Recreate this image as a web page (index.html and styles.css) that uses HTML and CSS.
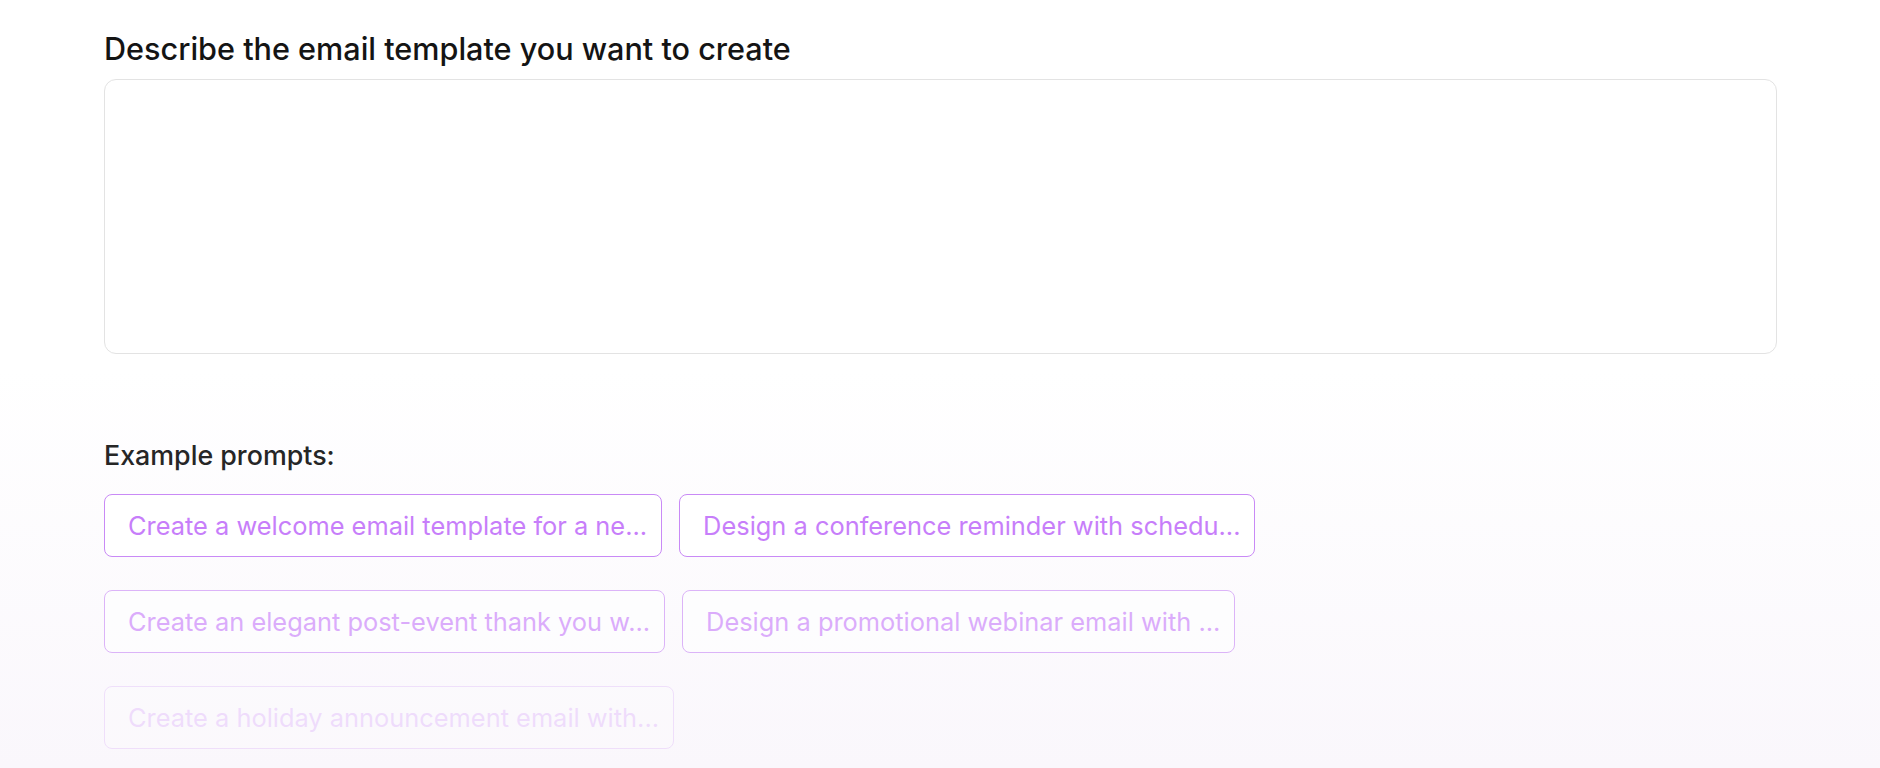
FILE: index.html
```html
<!DOCTYPE html>
<html lang="en">
<head>
<meta charset="utf-8">
<title>Email template generator</title>
<link rel="stylesheet" href="styles.css">
</head>
<body>
<main class="page">
  <h1 class="title">Describe the email template you want to create</h1>
  <textarea class="prompt-box"></textarea>
  <section class="examples">
    <h2 class="examples-title">Example prompts:</h2>
    <div class="prompt-list">
      <div class="prompt-row row-1">
        <button class="prompt-btn">Create a welcome email template for a ne...</button>
        <button class="prompt-btn">Design a conference reminder with schedu...</button>
      </div>
      <div class="prompt-row row-2">
        <button class="prompt-btn">Create an elegant post-event thank you w...</button>
        <button class="prompt-btn">Design a promotional webinar email with ...</button>
      </div>
      <div class="prompt-row row-3">
        <button class="prompt-btn">Create a holiday announcement email with...</button>
      </div>
    </div>
  </section>
</main>
</body>
</html>
```

FILE: styles.css
```css
html, body {
  margin: 0;
  height: 100%;
}
body {
  background: linear-gradient(to bottom, #ffffff 0%, #ffffff 48%, #faf7fc 100%);
  font-family: Inter, "Liberation Sans", sans-serif;
  overflow: hidden;
}
.page {
  padding: 31px 103px 0 104px;
  display: flex;
  flex-direction: column;
}
.title {
  margin: 0;
  font-size: 30.6px;
  line-height: 36px;
  font-weight: 500;
  color: #141414;
}
.prompt-box {
  margin-top: 12px;
  height: 275px;
  box-sizing: border-box;
  border: 1.5px solid #e3e3e3;
  border-radius: 12px;
  background: #fff;
  resize: none;
  outline: none;
  width: 100%;
}
.examples {
  margin-top: 86px;
}
.examples-title {
  margin: 0;
  font-size: 26.8px;
  line-height: 30px;
  font-weight: 500;
  color: #262626;
}
.prompt-list {
  margin-top: 24px;
  display: flex;
  flex-direction: column;
  gap: 33px;
}
.prompt-row {
  display: flex;
  gap: 17px;
}
.prompt-btn {
  height: 63px;
  padding: 0 14px 0 23px;
  border: 1.5px solid #c98af6;
  border-radius: 8px;
  background: #fff;
  color: #c77efa;
  font-family: Inter, "Liberation Sans", sans-serif;
  font-size: 25.4px;
  white-space: nowrap;
  cursor: pointer;
}
.row-2 { opacity: 0.62; }
.row-3 { opacity: 0.22; }
```
